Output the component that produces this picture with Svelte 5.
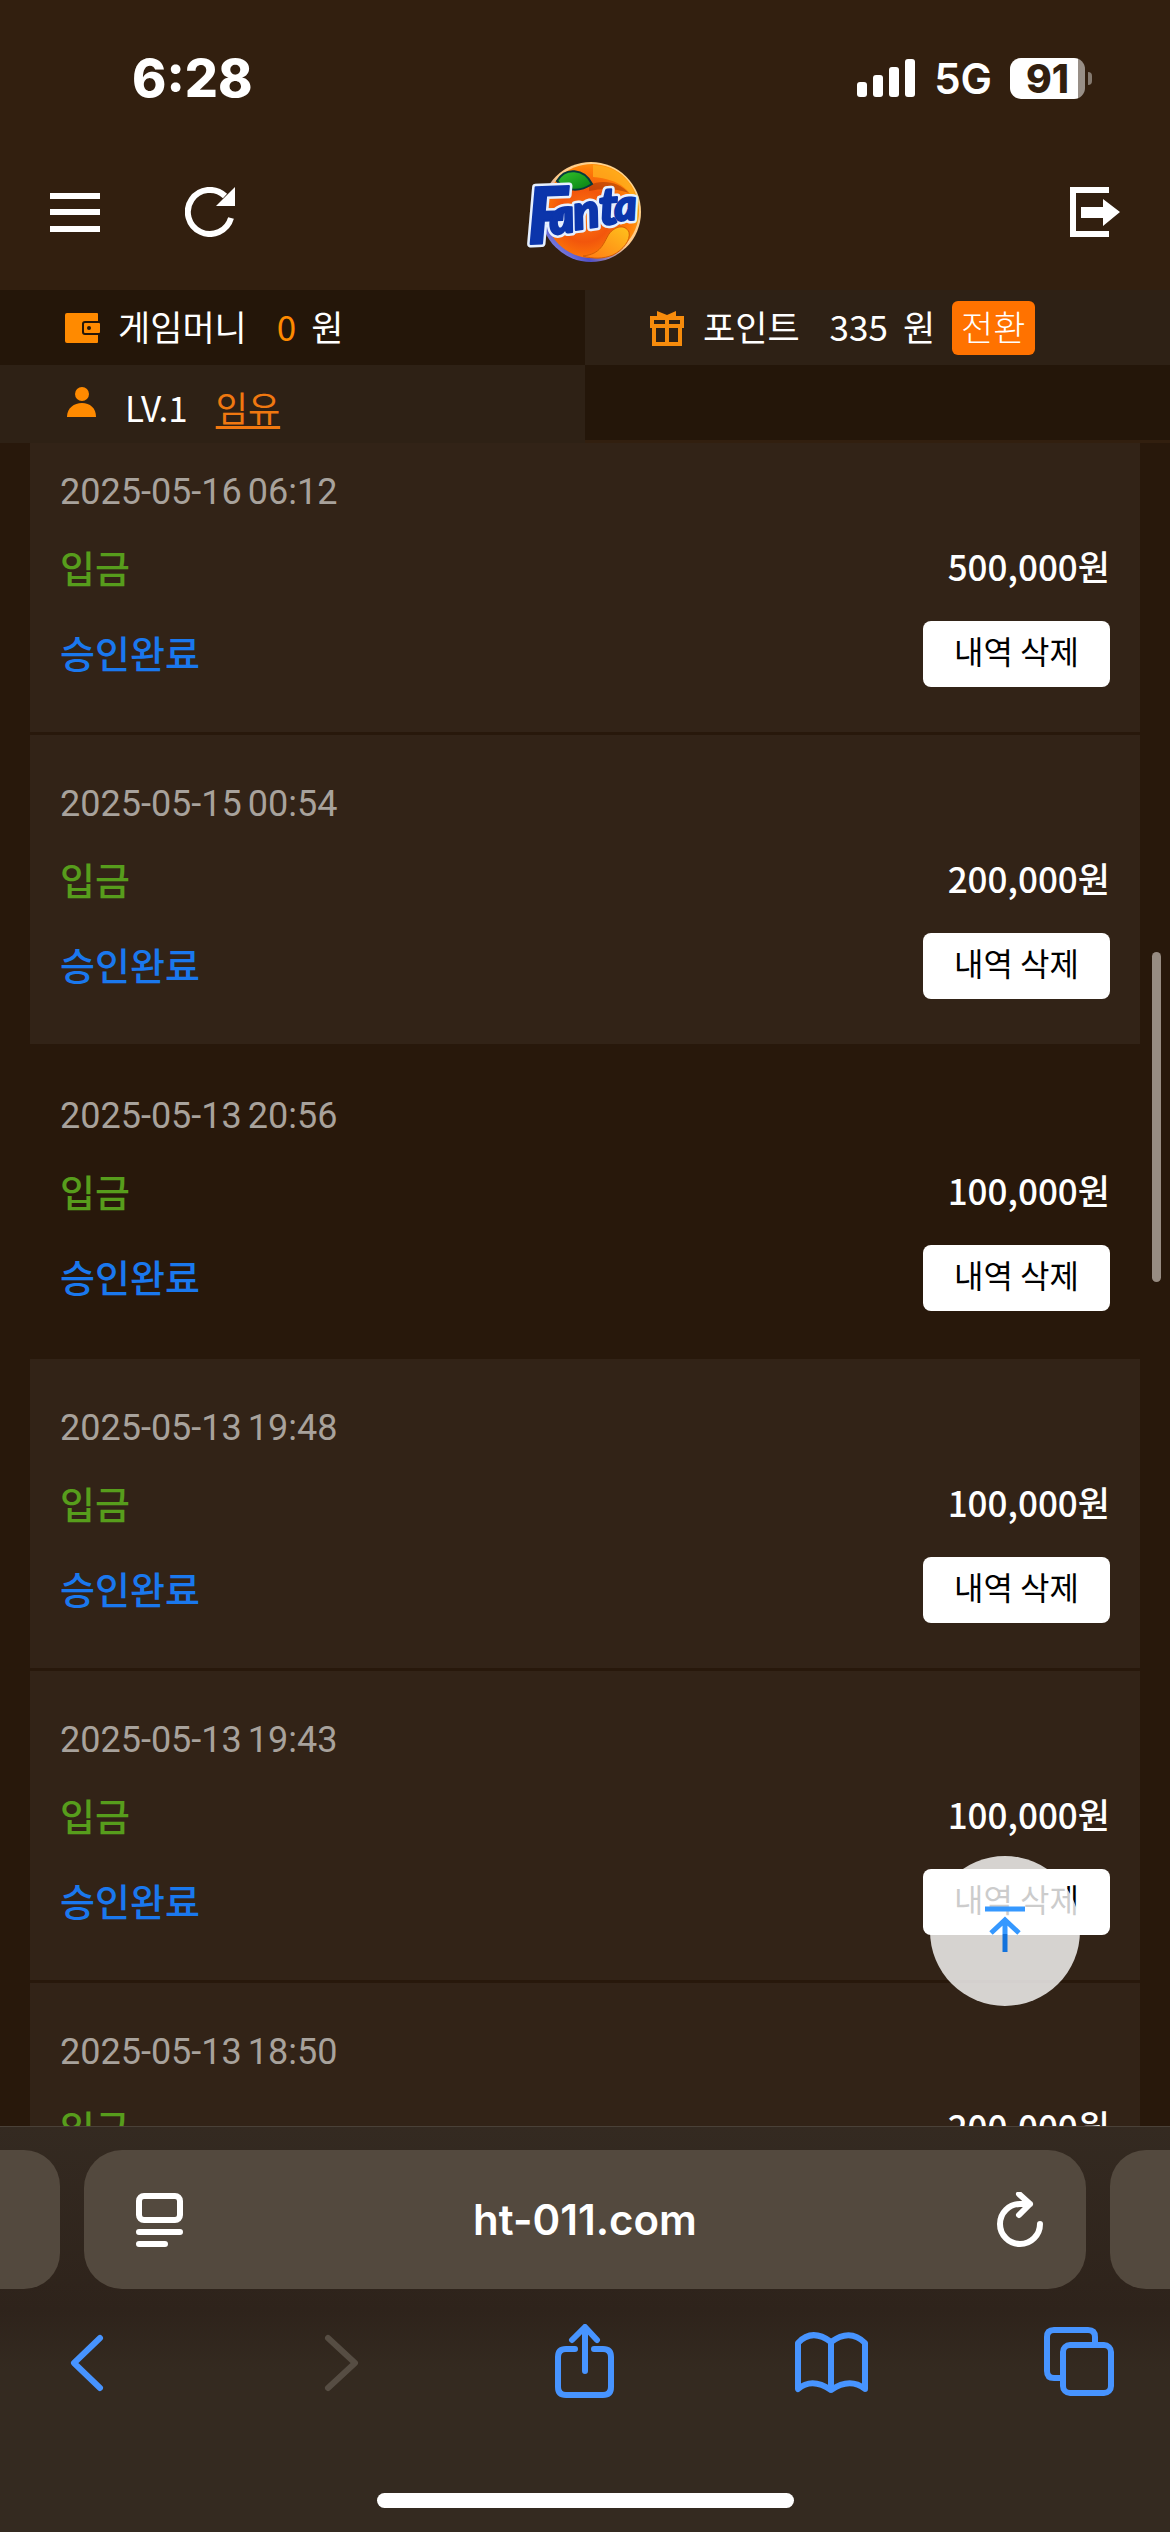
<script>
  const entries = [
    { day: '2025-05-16', time: '06:12', amount: '500,000원' },
    { day: '2025-05-15', time: '00:54', amount: '200,000원' },
    { day: '2025-05-13', time: '20:56', amount: '100,000원', active: true },
    { day: '2025-05-13', time: '19:48', amount: '100,000원' },
    { day: '2025-05-13', time: '19:43', amount: '100,000원' },
    { day: '2025-05-13', time: '18:50', amount: '200,000원' }
  ];
</script>

{#snippet letters()}
  <text font-size="78" transform="translate(1 83) rotate(-2)">F</text>
  <text font-size="49" transform="translate(24 74) rotate(-8)">a</text>
  <text font-size="49" transform="translate(48 69) rotate(-8)">n</text>
  <text font-size="52" transform="translate(73 64) rotate(-4)">t</text>
  <text font-size="43" transform="translate(88 60) rotate(-4)">a</text>
{/snippet}

<div class="screen">
  <div class="status">
    <span class="time">6:28</span>
    <div class="status-right">
      <svg class="signal" viewBox="0 0 58 38" aria-hidden="true">
        <rect x="0" y="23" width="10" height="15" rx="3" />
        <rect x="16" y="16" width="10" height="22" rx="3" />
        <rect x="32" y="8" width="10" height="30" rx="3" />
        <rect x="48" y="0" width="10" height="38" rx="3" />
      </svg>
      <span class="network">5G</span>
      <div class="battery"><span class="cell">91</span><span class="tip"></span></div>
    </div>
  </div>

  <header>
    <div class="group">
      <button class="icon" aria-label="메뉴">
        <svg viewBox="0 0 50 50"><path fill="#fff" d="M0 6h50v6H0zM0 22h50v6H0zM0 39h50v6H0z" /></svg>
      </button>
      <button class="icon" aria-label="새로고침">
        <svg viewBox="0 0 50 50">
          <path fill="none" stroke="#fff" stroke-width="6" d="M46 31A22 22 0 1 1 40 9" />
          <path fill="#fff" d="M50 0v19H31z" />
        </svg>
      </button>
    </div>
    <a class="logo" href="#home" aria-label="Fanta">
      <svg viewBox="0 0 116 102">
        <defs>
          <radialGradient id="ball" cx="0.42" cy="0.55" r="0.62">
            <stop offset="0" stop-color="#ff7a10" />
            <stop offset="0.45" stop-color="#f2560c" />
            <stop offset="0.8" stop-color="#ff7d08" />
            <stop offset="1" stop-color="#ffa214" />
          </radialGradient>
          <linearGradient id="rim" x1="0" y1="1" x2="1" y2="0">
            <stop offset="0" stop-color="#aab4ff" />
            <stop offset="0.25" stop-color="#4f4fc8" />
            <stop offset="0.5" stop-color="#ffc98a" />
            <stop offset="1" stop-color="#ffd98c" />
          </linearGradient>
          <linearGradient id="leaf" x1="0" y1="0" x2="1" y2="1">
            <stop offset="0" stop-color="#35c42c" />
            <stop offset="1" stop-color="#067f14" />
          </linearGradient>
          <linearGradient id="slice" x1="1" y1="0" x2="0" y2="1">
            <stop offset="0" stop-color="#ffc21c" />
            <stop offset="1" stop-color="#ff7a14" />
          </linearGradient>
        </defs>
        <circle cx="64" cy="51" r="50" fill="url(#rim)" />
        <circle cx="65" cy="50" r="47" fill="url(#ball)" />
        <path fill="#ffb01e" opacity="0.75" d="M66 4c28 1 46 22 45 48-4-22-18-34-45-36z" />
        <path fill="#9d3004" opacity="0.5" d="M62 24c14-6 30-3 40 8-14-5-26-5-40-2z" />
        <path fill="url(#slice)" stroke="#d45c04" d="M56 95c18-2 20-12 26-22 6-8 16-10 20-2 2 8-6 18-16 23-10 4-20 4-30 1z" />
        <path fill="url(#leaf)" stroke="#063a3c" stroke-width="2" d="M30 20c8-14 27-13 35 3-12 8-26 8-35-3z" />
        <g class="wordmark outline" aria-hidden="true">{@render letters()}</g>
        <g class="wordmark">{@render letters()}</g>
      </svg>
    </a>
    <button class="icon" aria-label="로그아웃">
      <svg viewBox="0 0 50 50">
        <path fill="none" stroke="#fff" stroke-width="6" d="M39 3H3v44h36" />
        <path fill="#fff" d="M11 20h22v-8l17 13-17 14v-8H11z" />
      </svg>
    </button>
  </header>

  <div class="info">
    <div class="cell-info dark">
      <svg class="mini" viewBox="0 0 36 36">
        <path fill="#ff8a00" d="M2 3h30q1 0 1 1v7H20q-3 0-3 3v8q0 3 3 3h13v7q0 1-1 1H2q-2 0-2-2V5q0-2 2-2z" />
        <rect x="19" y="13" width="16" height="10" rx="1" fill="#ff8a00" />
        <circle cx="24" cy="18" r="2" fill="#241609" />
      </svg>
      <span class="label">게임머니</span><span class="zero">0</span><span>원</span>
    </div>
    <div class="cell-info">
      <svg class="mini" viewBox="0 0 36 36">
        <g fill="none" stroke="#f78c0c" stroke-width="4">
          <path d="M2 8h30v8H2zM4 17v17h26V17M17 8v26" />
        </g>
        <path fill="#f78c0c" d="M7 1l10 4 9-4v7H7z" />
      </svg>
      <span class="label">포인트</span><span class="points">335</span><span>원</span>
      <button class="convert">전환</button>
    </div>
    <div class="cell-info">
      <svg class="mini person" viewBox="0 0 36 36">
        <circle cx="17" cy="9" r="7" fill="#ff8a00" />
        <path fill="#ff8a00" d="M2 32c0-9 7-14 15-14s14 5 14 14z" />
      </svg>
      <span class="level">LV.1</span><a class="user" href="#me">임유</a>
    </div>
    <div class="cell-info dark short"></div>
  </div>

  <main>
    <ul>
      {#each entries as entry}
        <li class:active={entry.active}>
          <time><span>{entry.day}</span> <span>{entry.time}</span></time>
          <div class="line">
            <span class="kind">입금</span>
            <span class="amount">{entry.amount}</span>
          </div>
          <div class="line">
            <span class="state">승인완료</span>
            <button class="delete">내역 삭제</button>
          </div>
        </li>
      {/each}
    </ul>
    <div class="thumb"></div>
    <button class="to-top" aria-label="맨 위로">
      <svg viewBox="0 0 40 50">
        <path fill="none" stroke="#3598ff" stroke-width="5" d="M0 3h40M6 27l14-13 14 13M20 14v14" />
        <path fill="none" stroke="#1272dc" stroke-width="5" d="M20 28v18" />
      </svg>
    </button>
  </main>

  <footer>
    <div class="tabs">
      <div class="peek left"></div>
      <div class="address">
        <button class="bar-icon" aria-label="페이지 메뉴">
          <svg viewBox="-10 0 58 56">
            <g fill="none" stroke="#fff" stroke-width="6" stroke-linecap="round">
              <rect x="3" y="4" width="41" height="24" rx="5" />
              <path d="M3 40h41M3 52h26" />
            </g>
          </svg>
        </button>
        <a class="url" href="#address">ht-011.com</a>
        <button class="bar-icon" aria-label="새로고침">
          <svg viewBox="-10 3 58 56">
            <g fill="none" stroke="#fff" stroke-width="6" stroke-linecap="round" stroke-linejoin="round">
              <path d="M34 15H24A20 20 0 1 0 44 35M23 5l11 10-11 11" />
            </g>
          </svg>
        </button>
      </div>
      <div class="peek right"></div>
    </div>
    <nav>
      <button aria-label="뒤로"><svg viewBox="0 0 84 80"><path d="M57 14L31 39l26 25" /></svg></button>
      <button aria-label="앞으로" disabled><svg viewBox="0 0 84 80"><path d="M35 14l27 25-27 25" /></svg></button>
      <button aria-label="공유">
        <svg viewBox="0 0 84 80"><path d="M32 25h-9q-8 0-8 8v30q0 8 8 8h37q8 0 8-8V33q0-8-8-8h-9M42 47V5M29 16L42 3l12 13" /></svg>
      </button>
      <button aria-label="책갈피">
        <svg viewBox="0 0 84 80"><path d="M5 19q14-15 33-1 19-14 34 1v46q-15-12-34 1-19-13-33-1zM38 18v48" /></svg>
      </button>
      <button aria-label="탭">
        <svg viewBox="0 0 84 80"><rect x="20" y="21" width="48" height="48" rx="7" /><path d="M18 54h-7q-7 0-7-7V13q0-7 7-7h34q7 0 7 7v8" /></svg>
      </button>
    </nav>
    <div class="home"></div>
  </footer>
</div>

<style>
  :global(body) { margin: 0; background: #28180b; }
  .screen {
    height: 100vh;
    display: flex;
    flex-direction: column;
    overflow: hidden;
    background: #28180b;
    color: #fff;
    font-family: Roboto, "Noto Sans CJK KR", sans-serif;
  }
  button { border: 0; padding: 0; margin: 0; background: none; font: inherit; color: inherit; }
  a { color: inherit; text-decoration: none; }
  svg { display: block; }

  .status {
    height: 156px;
    flex: none;
    box-sizing: border-box;
    padding: 0 78px 0 132px;
    display: flex;
    align-items: center;
    justify-content: space-between;
    background: #321f0f;
    font-family: Inter, sans-serif;
  }
  .time { font-size: 52px; font-weight: 800; }
  .status-right { display: flex; align-items: center; }
  .signal { width: 58px; height: 38px; fill: #fff; }
  .network { margin-left: 19px; font-size: 42px; font-weight: 600; }
  .battery { margin-left: 18px; display: flex; align-items: center; gap: 3px; }
  .cell {
    width: 75px;
    height: 41px;
    border-radius: 11px;
    background: linear-gradient(to right, #fff 68px, #988f87 68px);
    color: #321f0f;
    font-size: 39px;
    font-weight: 800;
    line-height: 41px;
    text-align: center;
  }
  .tip { width: 4px; height: 13px; border-radius: 0 4px 4px 0; background: #84796f; }

  header {
    height: 134px;
    flex: none;
    box-sizing: border-box;
    padding: 0 50px 22px;
    display: grid;
    grid-template-columns: 1fr auto 1fr;
    align-items: center;
    background: #321f0f;
  }
  header > .icon { justify-self: end; }
  .group { display: flex; gap: 85px; }
  .icon svg { width: 50px; height: 50px; }
  .logo svg { width: 116px; height: 102px; overflow: visible; }
  .wordmark {
    font-family: Lato, sans-serif;
    font-weight: 900;
    font-style: italic;
    fill: #0b35ab;
    stroke: #0b35ab;
    stroke-width: 2px;
    stroke-linejoin: round;
  }
  .outline { stroke: #e6f0ff; stroke-width: 7px; }

  .info {
    flex: none;
    display: grid;
    grid-template-columns: 1fr 1fr;
    grid-template-rows: 75px 78px;
    background: #321f0f;
    font-family: "Noto Sans CJK KR", sans-serif;
    font-weight: 400;
    font-size: 35px;
    line-height: 48px;
  }
  .cell-info { display: flex; align-items: center; padding-left: 65px; background: #2e2115; }
  .cell-info span, .cell-info a { padding-bottom: 3px; }
  .dark { background: #241609; }
  .short { height: 75px; }
  .mini { width: 36px; height: 36px; }
  .person { align-self: flex-start; margin-top: 20px; }
  .label { margin: 0 30px 0 17px; }
  .zero { margin-right: 15px; color: #ff8a00; }
  .points { margin-right: 15px; }
  .convert {
    margin-left: 17px;
    padding: 0 9px 3px;
    height: 54px;
    border-radius: 6px;
    background: #ff7200;
    font-weight: 300;
  }
  .level { margin: 8px 28px 0 24px; }
  .user { margin-top: 8px; color: #f07810; text-decoration: underline; text-decoration-thickness: 3px; text-underline-offset: 4px; }

  main { position: relative; flex: 1; min-height: 0; overflow: hidden; }
  ul { list-style: none; margin: -20px 30px 0; padding: 0; }
  li {
    box-sizing: border-box;
    height: 312px;
    padding: 44px 30px 0;
    border-bottom: 3px solid #28180b;
    background: #322317;
  }
  .active { background: #28180b; }
  time { display: flex; gap: 6px; color: #a8a29c; font-size: 36px; line-height: 50px; }
  .line {
    display: flex;
    align-items: center;
    justify-content: space-between;
    height: 66px;
    margin-top: 19px;
    font-family: "Noto Sans CJK KR", sans-serif;
    font-weight: 500;
    font-size: 38px;
  }
  .line span { padding-bottom: 6px; }
  .kind { color: #579d1c; }
  .state { color: #1a78ee; }
  .line .amount { font-size: 35px; padding-bottom: 8px; }
  .delete {
    width: 187px;
    height: 66px;
    padding-bottom: 9px;
    border-radius: 8px;
    background: #fff;
    color: #000;
    font-size: 32px;
    font-weight: 400;
  }
  .thumb {
    position: absolute;
    top: 509px;
    right: 9px;
    width: 9px;
    height: 330px;
    border-radius: 5px;
    background: #978c82;
  }
  .to-top {
    position: absolute;
    right: 90px;
    bottom: 120px;
    width: 150px;
    height: 150px;
    border-radius: 50%;
    background: rgba(255, 255, 255, 0.8);
  }
  .to-top svg { width: 40px; height: 50px; margin: 0 auto; }

  footer {
    height: 406px;
    flex: none;
    box-sizing: border-box;
    border-top: 1px solid #4a4138;
    padding-top: 23px;
    display: flex;
    flex-direction: column;
    background: linear-gradient(#342a21, #2e231b 45%, #342a20 60%, #342a20);
  }
  .tabs { display: flex; gap: 24px; height: 139px; }
  .peek { width: 60px; background: #53493e; }
  .left { border-radius: 0 36px 36px 0; }
  .right { border-radius: 36px 0 0 36px; }
  .address {
    flex: 1;
    box-sizing: border-box;
    padding: 0 42px;
    display: flex;
    align-items: center;
    justify-content: space-between;
    border-radius: 38px;
    background: #53493e;
    font-family: Inter, sans-serif;
  }
  .bar-icon svg { width: 58px; height: 56px; }
  .url { font-size: 42px; font-weight: 600; }
  nav { display: flex; justify-content: space-between; margin-top: 35px; padding: 0 43px; }
  nav svg {
    width: 84px;
    height: 80px;
    fill: none;
    stroke: #4794ff;
    stroke-width: 6px;
    stroke-linecap: round;
    stroke-linejoin: round;
  }
  nav button:disabled svg { stroke: #564d43; }
  .home { width: 417px; height: 15px; margin: auto auto 24px; border-radius: 8px; background: #fff; }
</style>
